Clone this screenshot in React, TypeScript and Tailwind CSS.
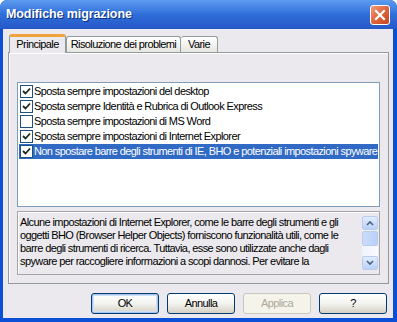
import React from 'react';

const items = [
  { label: 'Sposta sempre impostazioni del desktop', checked: true },
  { label: 'Sposta sempre Identità e Rubrica di Outlook Express', checked: true },
  { label: 'Sposta sempre impostazioni di MS Word', checked: false },
  { label: 'Sposta sempre impostazioni di Internet Explorer', checked: true },
  { label: 'Non spostare barre degli strumenti di IE, BHO e potenziali impostazioni spyware', checked: true, selected: true },
];

const descLines = [
  'Alcune impostazioni di Internet Explorer, come le barre degli strumenti e gli',
  'oggetti BHO (Browser Helper Objects) forniscono funzionalità utili, come le',
  'barre degli strumenti di ricerca. Tuttavia, esse sono utilizzate anche dagli',
  'spyware per raccogliere informazioni a scopi dannosi. Per evitare la',
];

function CheckBox({ checked }: { checked: boolean }) {
  return (
    <div className="w-[13px] h-[13px] border border-[#1c5180] bg-white flex items-center justify-center shrink-0">
      {checked && (
        <svg width="9" height="9" viewBox="0 0 9 9">
          <path d="M1 4 L3.5 6.5 L8 1.5" stroke="#1f2a1f" strokeWidth="1.8" fill="none" />
        </svg>
      )}
    </div>
  );
}

function Button({ label, primary, disabled }: { label: string; primary?: boolean; disabled?: boolean }) {
  return (
    <div
      className={
        'w-[68px] h-[21px] rounded-[3px] border flex items-center justify-center text-[11px] ' +
        (disabled
          ? 'border-[#c9c7ba] bg-[#f5f4ea] text-[#aca899]'
          : 'border-[#003c74] bg-gradient-to-b from-white via-[#f3f3ef] to-[#d6d0c5] text-black') +
        (primary ? ' shadow-[inset_0_0_0_1px_#a7c4f0,inset_0_0_0_2px_#cee0f7]' : '')
      }
    >
      {label}
    </div>
  );
}

export default function App() {
  return (
    <div className="w-[397px] h-[322px] bg-[#0a4fd6] rounded-t-[7px] flex flex-col overflow-hidden" style={{ fontFamily: '"Liberation Sans", Arial, sans-serif' }}>
      {/* title bar */}
      <div className="h-[29px] shrink-0 bg-gradient-to-b from-[#5e9cf0] via-[#2f6ed9] to-[#2558c7] flex items-center px-[6px] rounded-t-[7px]">
        <span className="text-white font-bold text-[12.5px] [text-shadow:1px_1px_0_#0c2f7c] tracking-[-0.1px]">
          Modifiche migrazione
        </span>
        <div className="ml-auto mr-[1px] w-[20px] h-[20px] rounded-[3px] border border-white bg-gradient-to-br from-[#f29a7a] via-[#e0643c] to-[#c4441e] flex items-center justify-center">
          <svg width="12" height="12" viewBox="0 0 12 12">
            <path d="M2 2 L10 10 M10 2 L2 10" stroke="white" strokeWidth="2.2" strokeLinecap="square" />
          </svg>
        </div>
      </div>

      {/* body */}
      <div className="flex-1 ml-[3px] mr-[4px] mb-[4px] bg-[#ebe9ed] flex flex-col px-[5px] pt-[4px] text-[11px] text-black tracking-[-0.6px]">
        {/* tabs */}
        <div className="flex items-end h-[19px] relative z-10 ml-[1px] whitespace-nowrap">
          <div className="w-[57px] h-[19px] bg-[#ebe9ed] border-x border-[#919b9c] border-t-[3px] border-t-[#f0a33c] rounded-t-[3px] flex items-center justify-center mb-[-1px] pb-[1px]">
            Principale
          </div>
          <div className="w-[115px] h-[16px] bg-gradient-to-b from-white to-[#e6e6e0] border border-b-0 border-[#919b9c] rounded-t-[3px] flex items-center justify-center">
            Risoluzione dei problemi
          </div>
          <div className="w-[37px] h-[16px] bg-gradient-to-b from-white to-[#e6e6e0] border border-b-0 border-l-0 border-[#919b9c] rounded-t-[3px] flex items-center justify-center">
            Varie
          </div>
        </div>

        {/* tab panel */}
        <div className="w-[381px] h-[232px] border border-[#919b9c] bg-[#ebe9ed] shadow-[inset_1px_1px_0_white] px-[8px] pt-[29px]">
          {/* list */}
          <div className="w-[363px] h-[125px] bg-white border border-[#7f9db9] pt-[1px] px-[1px]">
            {items.map((it) => (
              <div key={it.label} className={'h-[15px] flex items-center ' + (it.selected ? 'bg-[#316ac5] text-white' : '')}>
                <div className="w-[13px] ml-[1px] mr-[1px] flex">
                  <CheckBox checked={it.checked} />
                </div>
                <span className="whitespace-nowrap leading-[15px]">{it.label}</span>
              </div>
            ))}
          </div>

          {/* description */}
          <div className="mt-[4px] w-[363px] h-[64px] border border-[#a5a5a5] shadow-[inset_1px_1px_0_white] flex">
            <div className="flex-1 pl-[2px] pt-[4px] leading-[13px]">
              {descLines.map((l) => (
                <div key={l} className="whitespace-nowrap">{l}</div>
              ))}
            </div>
            <div className="w-[16px] mr-[1px] mt-[4px] mb-[4px] flex flex-col bg-[#f3f1ec]">
              <div className="h-[14px] rounded-[2px] border border-[#b8cbf0] bg-gradient-to-b from-[#e2ecfd] to-[#b9d1f8] flex items-center justify-center">
                <svg width="8" height="6" viewBox="0 0 8 6"><path d="M1 5 L4 2 L7 5" stroke="#4d6185" strokeWidth="1.6" fill="none" /></svg>
              </div>
              <div className="h-[15px] mt-[1px] rounded-[2px] border border-[#b8cbf0] bg-gradient-to-r from-[#cbdcfa] to-[#b9d0f7]" />
              <div className="flex-1 bg-gradient-to-r from-[#eef3fc] to-[#f8fafd]" />
              <div className="h-[14px] rounded-[2px] border border-[#b8cbf0] bg-gradient-to-b from-[#e2ecfd] to-[#b9d1f8] flex items-center justify-center">
                <svg width="8" height="6" viewBox="0 0 8 6"><path d="M1 1 L4 4 L7 1" stroke="#4d6185" strokeWidth="1.6" fill="none" /></svg>
              </div>
            </div>
          </div>
        </div>

        {/* buttons */}
        <div className="flex justify-end gap-[8px] mt-[9px] pr-[1px]">
          <Button label="OK" primary />
          <Button label="Annulla" />
          <Button label="Applica" disabled />
          <Button label="?" />
        </div>
      </div>
    </div>
  );
}
